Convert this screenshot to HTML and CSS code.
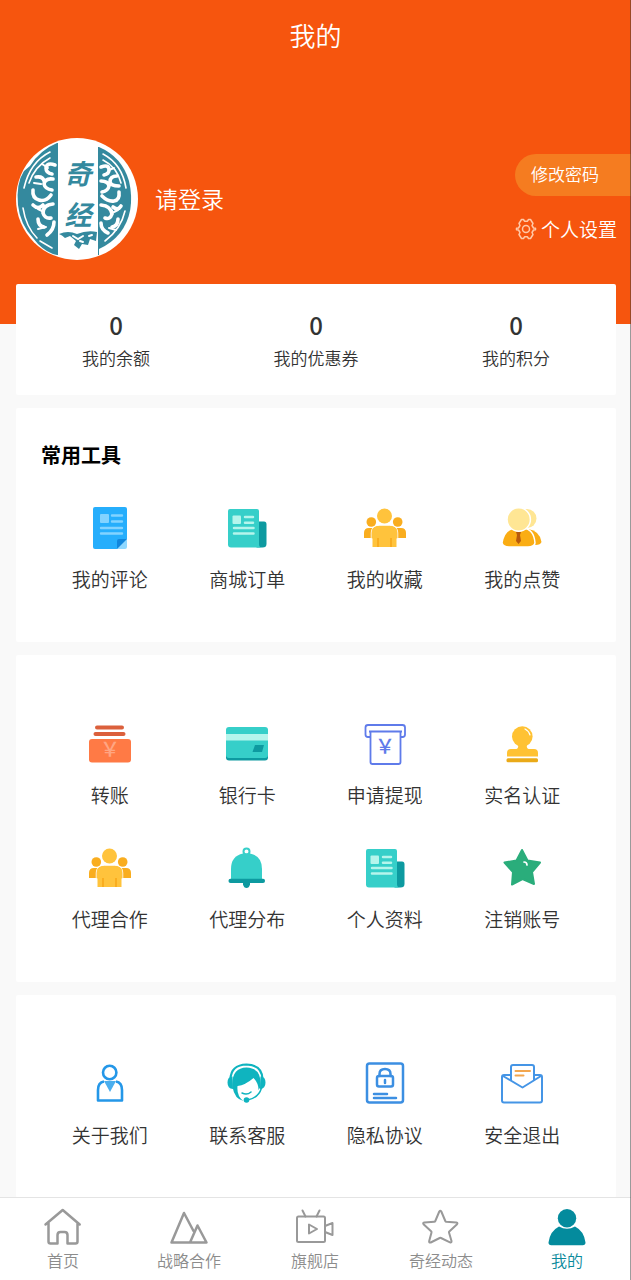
FILE: index.html
```
<!DOCTYPE html>
<html lang="zh-CN">
<head>
    <meta charset="UTF-8">
    <meta name="viewport" content="width=device-width, initial-scale=1.0">
    <title>我的</title>
    <link rel="stylesheet" href="styles.css">
</head>
<body>
    <!-- Shared icons -->
    <svg class="sprite" width="0" height="0" aria-hidden="true">
        <symbol id="icon-people" viewBox="0 0 48 48">
            <path fill="#f9ad1f" d="M3 34v-5q0-5 5-5h32q5 0 5 5v5z"/>
            <circle cx="10.300" cy="18" r="4.800" fill="#f9ad1f"/>
            <circle cx="36.700" cy="18" r="4.800" fill="#f9ad1f"/>
            <path fill="#ffc33c" d="M10.500 33v-4q0-7.500 8-7.500h10q8 0 8 7.500v4q0 1.500-1 1.500V43h-24v-8.500q-1 0-1-1.500z"/>
            <path fill="none" stroke="#fff" stroke-width=".8" d="M10.200 34v-5q0-7.800 8.300-7.800h10q8.300 0 8.300 7.800v5"/>
            <path fill="#f9ad1f" d="M16 34h2v9h-2zM29 34h2v9h-2z"/>
            <circle cx="23.500" cy="12" r="7.500" fill="#ffc33c"/>
        </symbol>
        <symbol id="icon-news" viewBox="0 0 48 48">
            <path fill="#0d9aa0" d="M34 17.500h7q2.500 0 2.500 3V40q0 3.500-4 3.500h-6z"/>
            <path fill="#36cfc9" d="M7 5h27q2 0 2 2v33q0 3.500 3 3.500H8q-3 0-3-3V7q0-2 2-2z"/>
            <rect x="9.500" y="11.500" width="8.500" height="8.500" rx="1" fill="#b5f5ec"/>
            <path stroke="#b5f5ec" stroke-width="2.500" stroke-linecap="round" d="M22 13h8M22 18.700h8M11 24h19.500M11 29.500h19.500"/>
        </symbol>
    </svg>

    <header class="header">
        <h1>我的</h1>
        <div class="profile">
            <svg class="avatar" viewBox="0 0 122 122" role="img" aria-label="奇经">
                <circle cx="61" cy="61" r="61" fill="#fff"/>
                <path fill="#34899e" d="M41 5v112q-10-2-19-11l-5-6Q4 86 2 67 0 45 8 33l6-5q10-16 27-23z"/>
                <path fill="#34899e" d="M83 9q23 10 30 34 7 31-9 52-8 10-21 16z"/>
                <g fill="none" stroke="#fff" stroke-linecap="round">
                    <path stroke-width="1.600" d="M34 14Q14 24 8 50M7 70q3 19 14 30M34 20Q19 28 13 45M24 103l12 7"/>
                    <path stroke-width="1.600" d="M87 16q19 10 23 34M109 73q-4 18-20 30M87 22q14 7 18 23"/>
                    <path stroke-width="3.600" d="M39 27q-8-3-9 3 0 5 6 6M37 41q-8-1-9 5 1 5 8 6M20 39q7-1 8 4M17 52q-1 8 6 10t12-5M17 67q5 5 10 0M37 66q-10 1-10 9 2 6 8 5M22 81q0 7 6 8M38 84q0 8-7 13"/>
                    <path stroke-width="3.600" d="M85 29q8-3 8 3 0 4-5 5M101 38q-7 0-7 6 1 4 9 4M85 43q7 0 8 5-1 5-7 6M103 54q1 8-5 9t-12-5M85 67q10 1 11 9-2 6-7 4M105 68q-3 5-8 1M102 81q0 7-6 8M85 85q0 7 7 10"/>
                    <path stroke-width="2" d="M32 30l-6-4M25 46l-7-1M28 74l-6-3M30 89l-8 2M93 32l5-2M96 75l6-3M93 90l7 2"/>
                </g>
                <path stroke="#34899e" d="M41.500 5v112M82.500 9v108"/>
                <text class="seal-text" x="62" y="46" text-anchor="middle">奇</text>
                <text class="seal-text" x="62" y="87" text-anchor="middle">经</text>
                <path fill="#34899e" d="M43 96q9-4 18 0 10-4 20-2l-1 9-6-2-2 6-6-1-3 5-5-4 2-4-6-5-5 2q-3-3-6-4z"/>
                <path fill="none" stroke="#fff" stroke-width="2" stroke-linecap="round" d="M57 98l5 3 5-3M64 103l3 1M73 98l3-1"/>
            </svg>
            <a class="login" href="#">请登录</a>
            <div class="profile-actions">
                <button class="password-btn" type="button">修改密码</button>
                <a class="settings" href="#">
                    <svg viewBox="0 0 22 22" fill="none" stroke="#ffc9a8" stroke-width="1.500" stroke-linejoin="round" aria-hidden="true">
                        <path d="M6.500 1.500h2l1 1.700h3l1-1.700h2l2.500 4-1 2 1.500 2.500 2 .2v1.600l-2 .2L17 14.500l1 2-2.500 4h-2l-1-1.700h-3l-1 1.700h-2l-2.500-4 1-2L3.500 12l-2-.2v-1.600l2-.2L5 7.500l-1-2z"/>
                        <circle cx="11" cy="11" r="3.500"/>
                    </svg>
                    个人设置
                </a>
            </div>
        </div>
    </header>

    <main>
        <section class="card stats">
            <a href="#"><strong>0</strong><span>我的余额</span></a>
            <a href="#"><strong>0</strong><span>我的优惠券</span></a>
            <a href="#"><strong>0</strong><span>我的积分</span></a>
        </section>

        <section class="card">
            <h2>常用工具</h2>
            <div class="grid">
                <a href="#">
                    <svg viewBox="0 0 48 48" aria-hidden="true">
                        <path fill="#26aefc" d="M9 3h30q2 0 2 2v30L31 45H9q-2 0-2-2V5q0-2 2-2z"/>
                        <path fill="#8fd8ff" d="M41 35v8q0 2-2 2h-8z"/>
                        <path fill="#1186dc" d="M41 35l-10 10v-8q0-2 2-2z"/>
                        <rect x="14" y="10" width="9" height="9" rx="1" fill="#83d3ff"/>
                        <path stroke="#83d3ff" stroke-width="2.400" stroke-linecap="round" d="M26 11.500h10M26 17.500h10M15 24h21M15 29.500h21"/>
                    </svg>
                    <span>我的评论</span>
                </a>
                <a href="#">
                    <svg aria-hidden="true"><use href="#icon-news"/></svg>
                    <span>商城订单</span>
                </a>
                <a href="#">
                    <svg aria-hidden="true"><use href="#icon-people"/></svg>
                    <span>我的收藏</span>
                </a>
                <a href="#">
                    <svg viewBox="0 0 48 48" aria-hidden="true">
                        <circle cx="29" cy="14.500" r="9.500" fill="#ffe694"/>
                        <path fill="#faad14" d="M30 25q12 2 13.500 13-1 3-6 3z"/>
                        <path fill="#faad14" stroke="#fff" stroke-width="1.500" d="M4 39q2-14 13-15h8q11 1 12 15-1 4-7 4H11q-6 0-7-4z"/>
                        <circle cx="20.700" cy="15.500" r="11.700" fill="#ffe694" stroke="#fff" stroke-width="1.500"/>
                        <path fill="#b85a0c" d="M18 28h5l-1 3 1 6-2.500 3-2.500-3 1-6z"/>
                    </svg>
                    <span>我的点赞</span>
                </a>
            </div>
        </section>

        <section class="card card-plain">
            <div class="grid">
                <a href="#">
                    <svg viewBox="0 0 48 48" aria-hidden="true">
                        <rect x="9" y="5.500" width="29" height="4" rx="2" fill="#db603c"/>
                        <rect x="7.500" y="12" width="32" height="4" rx="2" fill="#db603c"/>
                        <rect x="3" y="19" width="42" height="23.500" rx="3" fill="#ff7a45"/>
                        <text class="yen" x="24" y="37" text-anchor="middle" fill="#ffa582">￥</text>
                    </svg>
                    <span>转账</span>
                </a>
                <a href="#">
                    <svg viewBox="0 0 48 48" aria-hidden="true">
                        <rect x="3" y="9" width="42" height="31.500" rx="3" fill="#0d9aa0"/>
                        <rect x="3" y="7" width="42" height="31" rx="3" fill="#36cfc9"/>
                        <path fill="#b5f5ec" d="M3 14h42v6.500H3z"/>
                        <path fill="#0d9aa0" d="M32 25h9l-2 7h-9.500z"/>
                    </svg>
                    <span>银行卡</span>
                </a>
                <a href="#">
                    <svg viewBox="0 0 48 48" fill="none" stroke="#5f7bea" stroke-width="1.800" stroke-linejoin="round" aria-hidden="true">
                        <path d="M9 17H7q-2.500 0-2.500-2.500v-7Q4.500 5 7 5h34.500Q44 5 44 7.500v7q0 2.500-2.500 2.500H40M8 11.500h33"/>
                        <path d="M9.500 12v30q0 2 2 2h26q2 0 2-2V12"/>
                        <text class="yen" x="24" y="34" text-anchor="middle" fill="#5f7bea" stroke="none">￥</text>
                    </svg>
                    <span>申请提现</span>
                </a>
                <a href="#">
                    <svg viewBox="0 0 48 48" aria-hidden="true">
                        <path fill="#ffc233" d="M20 25h9q-1 4 3 4h4q4 0 4 4v3.500H9V33q0-4 4-4h4q4 0 3-4z"/>
                        <circle cx="24.300" cy="16.500" r="10.300" fill="#ffc233"/>
                        <path fill="none" stroke="#fff" stroke-width="1.200" stroke-linecap="round" d="M27 9q4 2 5 6"/>
                        <rect x="8.500" y="38.300" width="31.500" height="4" rx="1.500" fill="#eaaa18"/>
                    </svg>
                    <span>实名认证</span>
                </a>
                <a href="#">
                    <svg aria-hidden="true"><use href="#icon-people"/></svg>
                    <span>代理合作</span>
                </a>
                <a href="#">
                    <svg viewBox="0 0 48 48" aria-hidden="true">
                        <circle cx="23.500" cy="7.500" r="3" fill="none" stroke="#36cfc9" stroke-width="2"/>
                        <path fill="#0d9aa0" d="M20 38h7v2.500q-1 3.500-3.500 3.500T20 40.500z"/>
                        <path fill="#36cfc9" d="M8 35V25Q8 12 20 9.500h7Q39 12 39 25v10z"/>
                        <rect x="5.500" y="34.700" width="36.500" height="4.300" rx="2" fill="#0d9aa0"/>
                    </svg>
                    <span>代理分布</span>
                </a>
                <a href="#">
                    <svg aria-hidden="true"><use href="#icon-news"/></svg>
                    <span>个人资料</span>
                </a>
                <a href="#">
                    <svg viewBox="0 0 48 48" aria-hidden="true">
                        <path fill="#2aad7b" stroke="#2aad7b" stroke-width="2" stroke-linejoin="round" d="M24 6l5.500 10.500L42 18.500 34 28l2 12-11.500-5L14 40.500 15 28 6.500 18.500l12-2z"/>
                        <path fill="none" stroke="#fff" stroke-width="1.700" stroke-linecap="round" d="M26 18q3 0 3 3"/>
                    </svg>
                    <span>注销账号</span>
                </a>
            </div>
        </section>

        <section class="card card-plain">
            <div class="grid">
                <a href="#">
                    <svg viewBox="0 0 48 48" fill="none" stroke="#2497e8" stroke-width="2.600" stroke-linejoin="round" aria-hidden="true">
                        <circle cx="23.700" cy="12.500" r="6.700"/>
                        <path fill="#4aaeee" stroke="none" d="M18 21h12l-6 11z"/>
                        <path d="M18 21.500q-6 1-6 8.500v10.500h24V30q0-7.500-6-8.500"/>
                    </svg>
                    <span>关于我们</span>
                </a>
                <a href="#">
                    <svg viewBox="0 0 48 48" aria-hidden="true">
                        <path fill="none" stroke="#0fb4bf" stroke-width="2.200" d="M7.500 19Q8 5 23.500 4.500 39 5 39.500 19"/>
                        <path fill="#0fb4bf" d="M9.500 16.500q-5 0-5 6t5.500 6.500zM37.500 16.500q5 0 5 6T37 29z"/>
                        <path fill="#0fb4bf" d="M9.500 27Q8 8 23.500 7.500 39 8 37.500 27l-2 3q0-7-5-12-8 7-16 8-1 10 6 15-9-2-11-14z"/>
                        <path fill="none" stroke="#0fb4bf" stroke-width="1.500" stroke-linecap="round" d="M19 33q5 2.500 9-1M38.500 28q-3 10-14 12"/>
                        <circle cx="23.500" cy="40" r="2.800" fill="#0fb4bf"/>
                    </svg>
                    <span>联系客服</span>
                </a>
                <a href="#">
                    <svg viewBox="0 0 48 48" fill="none" stroke="#3c8fe2" stroke-width="2.500" stroke-linecap="round" aria-hidden="true">
                        <rect x="6" y="3.500" width="36" height="39" rx="2.500"/>
                        <rect x="16" y="16" width="16" height="10.500" rx="2"/>
                        <path d="M18.500 16v-2q0-5 5.500-5t5.500 5v2M24 20v3M13 34h13M13 38h22"/>
                    </svg>
                    <span>隐私协议</span>
                </a>
                <a href="#">
                    <svg viewBox="0 0 48 48" fill="none" stroke="#4595e6" stroke-width="2" stroke-linejoin="round" stroke-linecap="round" aria-hidden="true">
                        <path d="M13 15H6q-2 0-2 2v23.500q0 2 2 2h36q2 0 2-2V17q0-2-2-2h-6"/>
                        <path d="M5 16l19.500 11.500L43 16M13 20V7q0-2 2-2h19q2 0 2 2v13"/>
                        <path stroke="#f3a64e" d="M17.500 11H32M17.500 15.500h8"/>
                    </svg>
                    <span>安全退出</span>
                </a>
            </div>
        </section>
    </main>

    <nav class="tabbar">
        <a href="#">
            <svg viewBox="0 0 40 40" aria-hidden="true">
                <path d="M2.500 17.500L19.700 3l17 14.500M5.500 16v18.500q0 2 2 2h7V28q0-3 3-3h4q3 0 3 3v8.500h8q2 0 2-2V16"/>
            </svg>
            <span>首页</span>
        </a>
        <a href="#">
            <svg viewBox="0 0 40 40" aria-hidden="true">
                <path d="M2.500 35.500L15 6l9.500 18M21 35.500l7.500-17 9 17zM2.500 35.500H21"/>
            </svg>
            <span>战略合作</span>
        </a>
        <a href="#">
            <svg class="thin" viewBox="0 0 40 40" aria-hidden="true">
                <rect x="2" y="9.500" width="28" height="25.500" rx="1.500"/>
                <path d="M7.500 3.500l3 6M24.500 3.500l-3 6M30 19l7.500-3v12L30 25M14 17.500v9l8-4.500z"/>
            </svg>
            <span>旗舰店</span>
        </a>
        <a href="#">
            <svg class="thin" viewBox="0 0 40 40" aria-hidden="true">
                <path d="M18.300 4.500q1-1.500 2 0l4 9.500q.3.700 1 .8l10 .7q2 .5.500 2l-7.500 7q-.5.500-.3 1l2.500 8.500q.2 2-1.500 1.300L20 31q-.7-.3-1.300 0l-9 4.500q-2 .5-1.500-1.500l2.300-8.500q.2-.6-.4-1.200L2.800 17.500q-1.500-1.500.5-2l10-.8q.7 0 1-.7z"/>
            </svg>
            <span>奇经动态</span>
        </a>
        <a class="active" href="#">
            <svg viewBox="0 0 40 40" aria-hidden="true">
                <circle cx="20" cy="11.300" r="9.200"/>
                <path d="M12 19.500q8 4.500 16 0 9 4.500 10.500 16 0 2.800-2.800 2.800H4.300q-2.800 0-2.800-2.800Q3 24 12 19.500z"/>
            </svg>
            <span>我的</span>
        </a>
    </nav>
</body>
</html>
```

FILE: styles.css
```
* {
    margin: 0;
    padding: 0;
    box-sizing: border-box;
}

body {
    font-family: "Noto Sans CJK SC", sans-serif;
    font-weight: 350;
    background: #f9f9f9;
    color: #333;
    padding-bottom: 80px;
}

/* thin line down the right side of the window */
body::after {
    content: '';
    position: fixed;
    top: 0;
    right: 0;
    bottom: 0;
    width: 1px;
    background: rgba(60, 60, 60, 0.5);
}

a {
    color: inherit;
    text-decoration: none;
}

.sprite {
    display: block;
}

/* Header */
.header {
    background: #f6550e;
    color: #fff;
    padding-bottom: 64px;
}

h1 {
    font-size: 26px;
    font-weight: 350;
    line-height: 70px;
    text-align: center;
}

.profile {
    display: flex;
    align-items: center;
    margin-top: 68px;
    padding-left: 16px;
}

.avatar {
    width: 122px;
    height: 122px;
}

.seal-text {
    font-size: 27px;
    font-weight: 700;
    font-style: italic;
    fill: #34899e;
}

.login {
    font-size: 23px;
    margin-left: 17px;
    padding-bottom: 2px;
}

.profile-actions {
    margin-left: auto;
    display: flex;
    flex-direction: column;
    gap: 20px;
}

.password-btn {
    height: 42px;
    padding: 0 16px 4px;
    border: none;
    border-radius: 21px 0 0 21px;
    background: #f57c20;
    color: #fff;
    font-family: inherit;
    font-size: 17px;
    font-weight: 350;
    text-align: left;
    cursor: pointer;
}

.settings {
    display: flex;
    align-items: center;
    gap: 4px;
    padding: 0 14px 2px 0;
    font-size: 19px;
    line-height: 26px;
}

.settings svg {
    width: 22px;
    height: 22px;
}

/* Cards */
main {
    display: flex;
    flex-direction: column;
    gap: 13px;
    margin: -40px 15px 0 16px;
}

.card {
    background: #fff;
    border-radius: 2px;
    padding: 33px 25px 50px;
}

.card-plain {
    padding-top: 65px;
}

.stats {
    display: flex;
    padding: 28px 0 25px;
}

.stats a {
    flex: 1;
    display: flex;
    flex-direction: column;
    align-items: center;
    gap: 8px;
}

.stats strong {
    font-size: 24px;
    font-weight: 500;
    line-height: 26px;
}

.stats span {
    font-size: 17px;
    line-height: 24px;
}

h2 {
    color: #000;
    font-size: 20px;
    font-weight: 700;
    line-height: 28px;
    margin-bottom: 35px;
}

.grid {
    display: grid;
    grid-template-columns: repeat(4, 1fr);
    row-gap: 36px;
}

.grid a {
    display: flex;
    flex-direction: column;
    align-items: center;
    gap: 14px;
    font-size: 19px;
    line-height: 26px;
}

.grid svg {
    width: 48px;
    height: 48px;
}

.yen {
    font-family: "Noto Sans CJK SC", sans-serif;
    font-size: 20px;
    font-weight: 500;
}

/* Bottom tabs */
.tabbar {
    position: fixed;
    left: 0;
    right: 0;
    bottom: 0;
    display: flex;
    padding: 9px 1px 10px 0;
    background: #fff;
    border-top: 1px solid #e4e4e4;
}

.tabbar a {
    flex: 1;
    display: flex;
    flex-direction: column;
    align-items: center;
    gap: 3px;
    color: #8c8c8c;
    font-size: 16px;
    line-height: 20px;
}

.tabbar svg {
    width: 40px;
    height: 40px;
    fill: none;
    stroke: #999;
    stroke-width: 2.5;
    stroke-linecap: round;
    stroke-linejoin: round;
}

.tabbar .thin {
    stroke-width: 2;
}

.tabbar .active {
    color: #0a8a9c;
}

.tabbar .active svg {
    fill: #048b9d;
    stroke: none;
}
```
